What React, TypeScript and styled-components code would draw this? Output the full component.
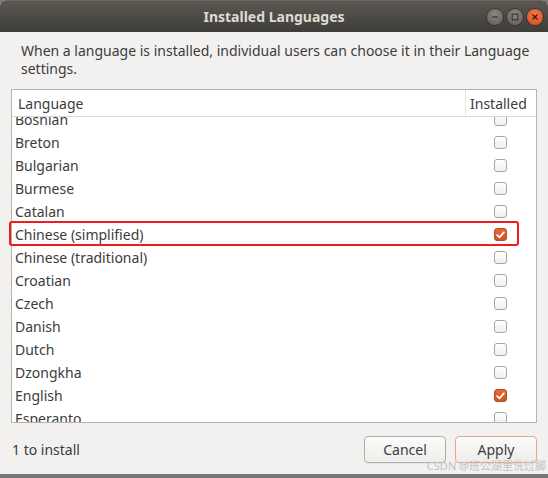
import React from "react"
import styled, { createGlobalStyle } from "styled-components"

const GlobalStyle = createGlobalStyle`
  html, body {
    margin: 0;
    padding: 0;
    background: #7b7b7b;
  }
  body {
    font-family: "Noto Sans", "Open Sans", sans-serif;
  }
`

const languages: { name: string; checked: boolean }[] = [
  { name: "Bosnian", checked: false },
  { name: "Breton", checked: false },
  { name: "Bulgarian", checked: false },
  { name: "Burmese", checked: false },
  { name: "Catalan", checked: false },
  { name: "Chinese (simplified)", checked: true },
  { name: "Chinese (traditional)", checked: false },
  { name: "Croatian", checked: false },
  { name: "Czech", checked: false },
  { name: "Danish", checked: false },
  { name: "Dutch", checked: false },
  { name: "Dzongkha", checked: false },
  { name: "English", checked: true },
  { name: "Esperanto", checked: false },
  { name: "Estonian", checked: false },
]

const Window = styled.div`
  width: 548px;
  height: 474px;
  display: flex;
  flex-direction: column;
  background: #f2f1f0;
  border-radius: 6px 6px 0 0;
  overflow: hidden;
  position: relative;
`

const TitleBar = styled.div`
  height: 32px;
  flex-shrink: 0;
  display: flex;
  align-items: center;
  justify-content: center;
  position: relative;
  background: linear-gradient(#5b5852, #3e3d39);
  border-top: 1px solid #6a675f;
  box-sizing: border-box;
`

const Title = styled.div`
  color: #dfdbd2;
  font-size: 14px;
  font-weight: bold;
`

const WinButtons = styled.div`
  position: absolute;
  right: 5px;
  top: 8px;
  display: flex;
  gap: 4px;
`

const WinButton = styled.div<{ $close?: boolean }>`
  width: 16px;
  height: 16px;
  border-radius: 50%;
  display: flex;
  align-items: center;
  justify-content: center;
  background: ${(p) =>
    p.$close
      ? "radial-gradient(circle at 50% 35%, #f5784a, #d9461a)"
      : "radial-gradient(circle at 50% 35%, #8a8680, #5d5a55)"};
  box-shadow: 0 0 0 1px #353430;
`

const Body = styled.div`
  flex: 1;
  display: flex;
  flex-direction: column;
  padding: 10px 11px 10px 11px;
  min-height: 0;
`

const Description = styled.p`
  margin: 0 0 0 10px;
  color: #3c3c3c;
  font-size: 14px;
  line-height: 18px;
`

const Table = styled.div`
  margin-top: 11px;
  height: 332px;
  background: #ffffff;
  border: 1px solid #b6b3ae;
  display: flex;
  flex-direction: column;
  overflow: hidden;
`

const HeaderRow = styled.div`
  display: grid;
  grid-template-columns: 1fr 71px;
  height: 26px;
  border-bottom: 1px solid #dcd9d5;
  flex-shrink: 0;
`

const HeaderCell = styled.div<{ $last?: boolean }>`
  display: flex;
  align-items: center;
  padding-left: ${(p) => (p.$last ? "4px" : "6px")};
  border-left: ${(p) => (p.$last ? "1px solid #e4e2df" : "none")};
  color: #3c3c3c;
  font-size: 14px;
`

const RowsViewport = styled.div`
  flex: 1;
  overflow: hidden;
`

const Rows = styled.div`
  margin-top: -9px;
`

const Row = styled.div`
  display: grid;
  grid-template-columns: 1fr 71px;
  height: 23px;
  align-items: center;
`

const Name = styled.div`
  padding-left: 3px;
  color: #3c3c3c;
  font-size: 14px;
`

const CheckCell = styled.div`
  display: flex;
  justify-content: center;
`

const Check = styled.div<{ $on: boolean }>`
  width: 11px;
  height: 11px;
  border-radius: 3px;
  border: 1px solid ${(p) => (p.$on ? "#b84a22" : "#aaa7a2")};
  background: ${(p) =>
    p.$on ? "linear-gradient(#e8693a, #d45222)" : "linear-gradient(#ffffff, #f1efed)"};
  display: flex;
  align-items: center;
  justify-content: center;
`

const Footer = styled.div`
  display: flex;
  align-items: center;
  margin-top: 13px;
  gap: 9px;
`

const Status = styled.div`
  flex: 1;
  color: #3c3c3c;
  font-size: 14px;
  padding-left: 1px;
`

const Button = styled.button<{ $accent?: boolean }>`
  width: 82px;
  height: 27px;
  border-radius: 4px;
  border: 1px solid ${(p) => (p.$accent ? "#e8a58a" : "#b0ada8")};
  background: linear-gradient(#fbfbfa, #eeedec);
  color: #3c3c3c;
  font-family: inherit;
  font-size: 14px;
  box-shadow: 0 1px 0 rgba(0, 0, 0, 0.05);
`

const Highlight = styled.div`
  position: absolute;
  left: 9px;
  top: 221px;
  width: 506px;
  height: 21px;
  border: 2.5px solid #f21b1b;
  border-radius: 3px;
  pointer-events: none;
`

const Watermark = styled.div`
  position: absolute;
  right: 2px;
  bottom: 1px;
  color: #c4c2bf;
  font-size: 11px;
  font-family: "Noto Sans", "Noto Sans CJK SC", sans-serif;
`

const Desktop = styled.div`
  height: 4px;
  background: #787878;
`

const CheckMark = () => (
  <svg width="9" height="8" viewBox="0 0 9 8">
    <path d="M1.2 4.2 L3.5 6.4 L7.8 1.4" fill="none" stroke="#fff" strokeWidth="1.8" strokeLinecap="round" strokeLinejoin="round" />
  </svg>
)

const App: React.FC = () => {
  return (
    <>
      <GlobalStyle />
      <Window>
        <TitleBar>
          <Title>Installed Languages</Title>
          <WinButtons>
            <WinButton>
              <svg width="8" height="8" viewBox="0 0 8 8">
                <path d="M1 4 H7" stroke="#3a3935" strokeWidth="1.3" />
              </svg>
            </WinButton>
            <WinButton>
              <svg width="8" height="8" viewBox="0 0 8 8">
                <rect x="1.2" y="1.2" width="5.6" height="5.6" fill="none" stroke="#3a3935" strokeWidth="1.2" />
              </svg>
            </WinButton>
            <WinButton $close>
              <svg width="8" height="8" viewBox="0 0 8 8">
                <path d="M1.5 1.5 L6.5 6.5 M6.5 1.5 L1.5 6.5" stroke="#3b1a0e" strokeWidth="1.3" />
              </svg>
            </WinButton>
          </WinButtons>
        </TitleBar>
        <Body>
          <Description>
            When a language is installed, individual users can choose it in their Language settings.
          </Description>
          <Table>
            <HeaderRow>
              <HeaderCell>Language</HeaderCell>
              <HeaderCell $last>Installed</HeaderCell>
            </HeaderRow>
            <RowsViewport>
              <Rows>
                {languages.map((l) => (
                  <Row key={l.name}>
                    <Name>{l.name}</Name>
                    <CheckCell>
                      <Check $on={l.checked}>{l.checked && <CheckMark />}</Check>
                    </CheckCell>
                  </Row>
                ))}
              </Rows>
            </RowsViewport>
          </Table>
          <Footer>
            <Status>1 to install</Status>
            <Button>Cancel</Button>
            <Button $accent>Apply</Button>
          </Footer>
        </Body>
        <Highlight />
        <Watermark>CSDN @班公湖里洗过脚</Watermark>
      </Window>
      <Desktop />
    </>
  )
}

export default App
